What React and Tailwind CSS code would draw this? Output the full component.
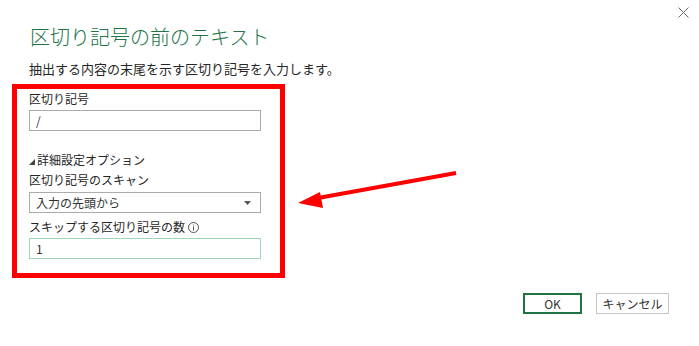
import React from 'react';

const jp = { fontFamily: '"Noto Sans CJK JP", "Noto Sans", sans-serif' };

function Field({ children, className = '' }) {
  return (
    <div
      className={`h-[21px] w-[232px] border bg-white px-[6px] text-[12px] leading-[19px] text-[#333] ${className}`}
    >
      {children}
    </div>
  );
}

export default function App() {
  return (
    <div className="relative h-[346px] w-[699px] overflow-hidden bg-white text-[#262626]" style={jp}>
      {/* close */}
      <svg className="absolute left-[678px] top-[7px]" width="11" height="11" viewBox="0 0 11 11">
        <path d="M0.5 0.5 L10.5 10.5 M10.5 0.5 L0.5 10.5" stroke="#6b6b6b" strokeWidth="1" />
      </svg>

      <div className="pl-[30px] pt-[25px]">
        <h1 className="h-[24px] text-[20px] font-light leading-[24px] text-[#217346]">区切り記号の前のテキスト</h1>
      </div>
      <p className="mt-[11px] h-[18px] pl-[29px] text-[13px] leading-[18px]">
        抽出する内容の末尾を示す区切り記号を入力します。
      </p>

      {/* highlighted options */}
      <div className="ml-[12px] mt-[6px] h-[194px] w-[273px] border-[5px] border-[#ff0000] pl-[12px] pt-[2px]">
        <div className="h-[16px] text-[12px] leading-[16px]">区切り記号</div>
        <Field className="mt-[3px] border-[#ababab]">/</Field>

        <div className="mt-[21px] flex h-[16px] items-center gap-[2px] text-[12px] leading-[16px]">
          <svg width="6" height="6" viewBox="0 0 6 6" className="mt-[3px]">
            <path d="M6 0 L6 6 L0 6 Z" fill="#444" />
          </svg>
          <span>詳細設定オプション</span>
        </div>
        <div className="mt-[4px] h-[16px] text-[12px] leading-[16px]">区切り記号のスキャン</div>
        <div className="mt-[4px] flex h-[21px] w-[232px] items-center justify-between border border-[#ababab] pl-[6px] pr-[9px] text-[12px] text-[#333]">
          <span>入力の先頭から</span>
          <svg width="7" height="4" viewBox="0 0 7 4">
            <path d="M0 0 L7 0 L3.5 4 Z" fill="#555" />
          </svg>
        </div>
        <div className="mt-[6px] flex h-[16px] items-center gap-[3px] text-[12px] leading-[16px]">
          <span>スキップする区切り記号の数</span>
          <svg width="11" height="11" viewBox="0 0 11 11">
            <circle cx="5.5" cy="5.5" r="5" fill="none" stroke="#555" strokeWidth="1" />
            <rect x="5" y="2.5" width="1" height="1" fill="#555" />
            <rect x="5" y="4.5" width="1" height="4" fill="#555" />
          </svg>
        </div>
        <Field className="mt-[3px] border-[#9fd6b6]">1</Field>
      </div>

      {/* annotation arrow */}
      <svg className="absolute left-[290px] top-[165px]" width="175" height="50" viewBox="0 0 175 50">
        <path d="M166 8 L28 33" stroke="#ff0000" strokeWidth="4" />
        <path d="M8 38 L30 27 L33 43 Z" fill="#ff0000" />
      </svg>

      <div className="absolute left-[523px] top-[293px] flex gap-[14px] text-[12px] font-normal">
        <button className="h-[21px] w-[59px] border-2 border-[#217346] font-normal leading-[17px] text-[#333]">OK</button>
        <button className="h-[21px] w-[73px] border border-[#c6c6c6] font-normal leading-[19px] text-[#333]">キャンセル</button>
      </div>
    </div>
  );
}
